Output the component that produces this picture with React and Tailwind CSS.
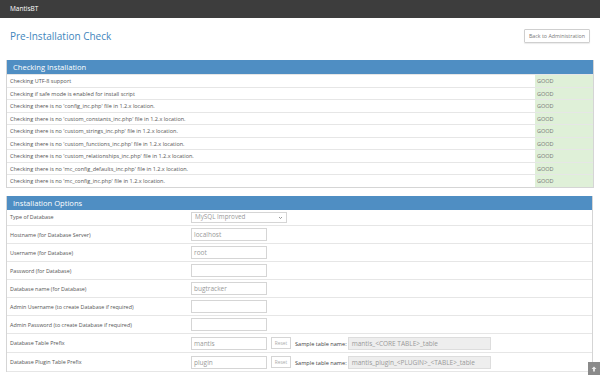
const checks = [
  'Checking UTF-8 support',
  'Checking if safe mode is enabled for install script',
  "Checking there is no 'config_inc.php' file in 1.2.x location.",
  "Checking there is no 'custom_constants_inc.php' file in 1.2.x location.",
  "Checking there is no 'custom_strings_inc.php' file in 1.2.x location.",
  "Checking there is no 'custom_functions_inc.php' file in 1.2.x location.",
  "Checking there is no 'custom_relationships_inc.php' file in 1.2.x location.",
  "Checking there is no 'mc_config_defaults_inc.php' file in 1.2.x location.",
  "Checking there is no 'mc_config_inc.php' file in 1.2.x location.",
]

const fields = [
  { label: 'Hostname (for Database Server)', value: 'localhost' },
  { label: 'Username (for Database)', value: 'root' },
  { label: 'Password (for Database)', value: '' },
  { label: 'Database name (for Database)', value: 'bugtracker' },
  { label: 'Admin Username (to create Database if required)', value: '' },
  { label: 'Admin Password (to create Database if required)', value: '' },
]

const prefixes = [
  { label: 'Database Table Prefix', value: 'mantis', sample: 'mantis_<CORE TABLE>_table' },
  { label: 'Database Plugin Table Prefix', value: 'plugin', sample: 'mantis_plugin_<PLUGIN>_<TABLE>_table' },
]

function TextBox({ value }) {
  return (
    <div className="w-[76px] h-[13px] border border-[#d5d5d5] bg-white px-[2px] text-[6.5px] leading-[11px] text-[#999]">
      {value}
    </div>
  )
}

function Header({ title }) {
  return (
    <div className="h-[14px] bg-[#4f8ec3] px-[6px] text-[7.6px] leading-[14px] text-white">
      {title}
    </div>
  )
}

export default function App() {
  return (
    <div className="relative h-[375px] overflow-hidden bg-white font-['Open_Sans',sans-serif] text-[#555]">
      <div className="h-[18px] bg-[#3d3d3d] px-[10px] text-[6.5px] leading-[18px] text-white">
        MantisBT
      </div>

      <div className="px-[6px]">
        <div className="flex items-center justify-between pl-[4px] pr-[4px] pt-[11px] pb-[17px]">
          <h1 className="text-[10px] leading-[14px] text-[#3f86bd]">Pre-Installation Check</h1>
          <button className="h-[14px] rounded-[1px] border border-[#cfcfcf] px-[4px] text-[5.3px] leading-[12px] text-[#777] shadow-[0_1px_1px_rgba(0,0,0,0.08)]">
            Back to Administration
          </button>
        </div>

        <div className="border-x border-b border-[#d5d5d5]">
          <Header title="Checking Installation" />
          {checks.map((c) => (
            <div key={c} className="flex h-[12.5px] border-t border-[#e6e6e6] first:border-t-0 text-[5.5px] leading-[12px]">
              <div className="flex-1 pl-[3px] text-[#555]">{c}</div>
              <div className="w-[58px] bg-[#dff0d8] pl-[2px] text-[#777]">GOOD</div>
            </div>
          ))}
        </div>

        <div className="mt-[8px] mr-[1px] border-x border-[#d5d5d5]">
          <Header title="Installation Options" />
          <div className="flex h-[16px] border-b border-[#e6e6e6] text-[5.4px]">
            <div className="w-[184px] pl-[3px] pt-[3px]">Type of Database</div>
            <div className="pt-[2px]">
              <div className="flex h-[11px] w-[96px] items-center justify-between border border-[#d5d5d5] px-[3px] text-[6.3px] text-[#999]">
                <span>MySQL Improved</span>
                <svg width="5" height="5" viewBox="0 0 10 10" fill="none" stroke="#777" strokeWidth="1.5">
                  <path d="M2 4l3 3 3-3" />
                </svg>
              </div>
            </div>
          </div>
          {fields.map((f) => (
            <div key={f.label} className="flex h-[18px] border-b border-[#e6e6e6] text-[5.4px]">
              <div className="w-[184px] pl-[3px] pt-[5px]">{f.label}</div>
              <div className="pt-[2px]">
                <TextBox value={f.value} />
              </div>
            </div>
          ))}
          {prefixes.map((p) => (
            <div key={p.label} className="flex h-[19px] border-b border-[#e6e6e6] text-[5.4px]">
              <div className="w-[184px] pl-[3px] pt-[5px]">{p.label}</div>
              <div className="flex items-start gap-[4px] pt-[3px]">
                <TextBox value={p.value} />
                <div className="h-[12px] w-[20px] border border-[#d5d5d5] text-center text-[4.8px] leading-[10px] text-[#aaa]">
                  Reset
                </div>
                <div className="pt-[3px] text-[5.6px] text-[#444]">Sample table name:</div>
                <div className="ml-[-3px] h-[13px] w-[143px] border border-[#ddd] bg-[#eee] px-[3px] text-[6.5px] leading-[11px] text-[#999]">
                  {p.sample}
                </div>
              </div>
            </div>
          ))}
        </div>
      </div>

      <div className="absolute bottom-0 right-0 flex h-[13px] w-[12px] items-center justify-center bg-[#8a8a8a]">
        <svg width="6" height="6" viewBox="0 0 10 10" fill="#eee">
          <path d="M5 1l4 4H6.5v4h-3V5H1z" />
        </svg>
      </div>
    </div>
  )
}
